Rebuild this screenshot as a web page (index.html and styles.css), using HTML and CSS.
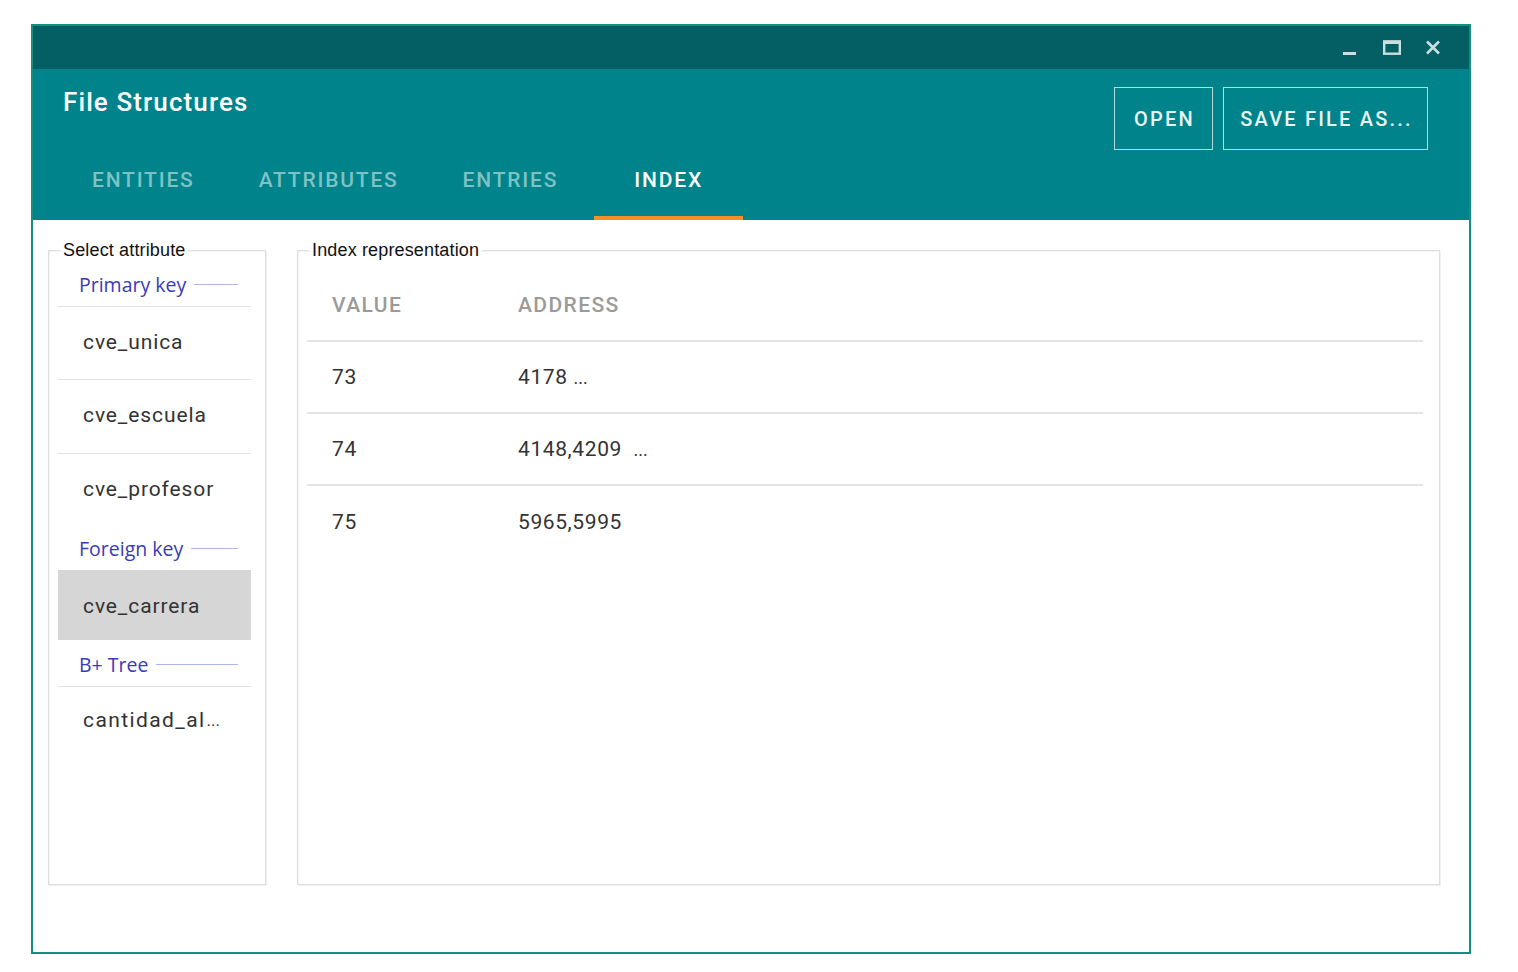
FILE: index.html
```html
<!DOCTYPE html>
<html>
<head>
<meta charset="utf-8">
<link rel="stylesheet" href="styles.css">
</head>
<body>
<div class="window">
  <div class="titlebar">
    <span class="ctl">
      <svg width="16" height="16" viewBox="0 0 16 16"><rect x="2" y="12" width="13" height="3" fill="#c9dfe0"/></svg>
    </span>
    <span class="ctl">
      <svg width="20" height="16" viewBox="0 0 20 16"><rect x="3.2" y="1.5" width="15.6" height="12.2" fill="none" stroke="#c9dfe0" stroke-width="2.4"/><rect x="2" y="0.5" width="18" height="3.5" fill="#c9dfe0"/></svg>
    </span>
    <span class="ctl">
      <svg width="16" height="16" viewBox="0 0 16 16"><path d="M2 1.5 L14 13.5 M14 1.5 L2 13.5" stroke="#c9dfe0" stroke-width="2.6"/></svg>
    </span>
  </div>
  <div class="header">
    <div class="header-top">
      <div class="app-title">File Structures</div>
      <div class="actions">
        <button class="btn btn-open">OPEN</button>
        <button class="btn btn-save">SAVE FILE AS...</button>
      </div>
    </div>
    <div class="tabs">
      <div class="tab">ENTITIES</div>
      <div class="tab">ATTRIBUTES</div>
      <div class="tab">ENTRIES</div>
      <div class="tab active">INDEX</div>
    </div>
  </div>
  <div class="content">
    <fieldset class="group left">
      <legend>Select attribute</legend>
      <div class="list">
        <div class="ghead"><span>Primary key</span><i></i></div>
        <div class="item first">cve_unica</div>
        <div class="item">cve_escuela</div>
        <div class="item">cve_profesor</div>
        <div class="ghead"><span>Foreign key</span><i></i></div>
        <div class="item selected">cve_carrera</div>
        <div class="ghead"><span>B+ Tree</span><i></i></div>
        <div class="item wide">cantidad_al<span class="dots">...</span></div>
      </div>
    </fieldset>
    <fieldset class="group right">
      <legend>Index representation</legend>
      <div class="table">
        <div class="row thead"><div class="c1">VALUE</div><div class="c2">ADDRESS</div></div>
        <div class="row"><div class="c1">73</div><div class="c2">4178 <span class="dots">...</span></div></div>
        <div class="row"><div class="c1">74</div><div class="c2">4148,4209 &nbsp;<span class="dots">...</span></div></div>
        <div class="row last"><div class="c1">75</div><div class="c2">5965,5995</div></div>
      </div>
    </fieldset>
  </div>
</div>
</body>
</html>
```

FILE: styles.css
```css
html, body { margin: 0; padding: 0; background: #ffffff; }
body { font-family: Roboto, "Liberation Sans", sans-serif; }

.window {
  position: absolute;
  left: 31px;
  top: 24px;
  width: 1436px;
  height: 926px;
  border: 2px solid #12907d;
  display: flex;
  flex-direction: column;
  background: #fff;
}

.titlebar {
  height: 43px;
  background: #035f63;
  display: flex;
  justify-content: flex-end;
  align-items: center;
  padding-right: 28px;
  gap: 24px;
}
.ctl { display: flex; align-items: center; height: 16px; }

.header {
  background: #00838a;
  height: 151px;
  box-sizing: border-box;
  display: flex;
  flex-direction: column;
}
.header-top {
  display: flex;
  justify-content: space-between;
  align-items: flex-start;
  padding: 0 41px 0 30px;
  height: 84px;
}
.app-title {
  color: #ffffff;
  font-size: 26px;
  font-weight: 500;
  margin-top: 18px;
  letter-spacing: 1.1px;
}
.actions { display: flex; gap: 10px; margin-top: 18px; }
.btn {
  background: transparent;
  border: 1px solid rgba(255,255,255,0.7);
  color: #e8f4f4;
  font-family: Roboto, "Liberation Sans", sans-serif;
  font-size: 20px;
  font-weight: 500;
  letter-spacing: 2.2px;
  height: 63px;
  padding: 0 0 0 2px;
  box-sizing: border-box;
}
.btn-open { width: 99px; }
.btn-save { width: 205px; }

.tabs {
  display: flex;
  padding-left: 27px;
  height: 67px;
}
.tab {
  color: #7fc2c5;
  font-size: 21px;
  font-weight: 500;
  letter-spacing: 1.8px;
  padding: 0 32px 13px;
  text-align: center;
  display: flex;
  align-items: center;
  justify-content: center;
  box-sizing: border-box;
}
.tab:nth-child(3) { margin-right: 4px; }
.tab.active {
  color: #ffffff;
  width: 149px;
  padding: 0 0 9px;
  border-bottom: 4px solid #f58e26;
}

.content {
  flex: 1;
  display: flex;
  gap: 31px;
  padding: 22px 29px 0 15px;
  align-items: flex-start;
}

.group {
  border: 1px solid #dedede;
  box-shadow: inset 1px 1px 0 #f4f4f4, 1px 1px 0 #f0f0f0;
  margin: 0;
  height: 643px;
  box-sizing: border-box;
  font-family: "Liberation Sans", Arial, sans-serif;
}
.group legend {
  font-size: 18px;
  line-height: 17px;
  color: #111;
  padding: 0 3px;
  margin-left: 2px;
  letter-spacing: 0.15px;
}
.left { width: 218px; padding: 0 14px 0 9px; }
.right { flex: 1; padding: 0 16px 0 9px; }

.list { margin-top: 4px; font-family: Roboto, "Liberation Sans", sans-serif; }
.ghead {
  height: 43px;
  display: flex;
  align-items: center;
  padding: 0 13px 0 21px;
  color: #3b3bb8;
  font-size: 19.5px;
  font-family: "Open Sans", "Noto Sans", sans-serif;
}
.ghead i {
  flex: 1;
  height: 1px;
  background: #a9b9e2;
  margin-left: 8px;
}
.item {
  height: 74px;
  border-top: 1px solid #e2e2e2;
  display: flex;
  align-items: center;
  padding: 0 0 3px 25px;
  font-size: 21px;
  letter-spacing: 0.9px;
  color: #333;
  box-sizing: border-box;
}
.item.first { height: 73px; }
.item.selected {
  background: #d6d6d6;
  border-top-color: #d6d6d6;
  height: 70px;
  padding-bottom: 0;
  margin-bottom: 3px;
}
.item.wide { letter-spacing: 1.4px; padding-bottom: 8px; }
.item .dots { font-size: 17px; letter-spacing: 0; margin-left: 1px; }

.table { margin-top: 6px; font-family: Roboto, "Liberation Sans", sans-serif; }
.row {
  display: flex;
  align-items: center;
  height: 72px;
  border-bottom: 2px solid #e4e4e4;
  font-size: 21px;
  letter-spacing: 0.6px;
  color: #333;
  box-sizing: border-box;
}
.row.thead {
  height: 77px;
  color: #9a9a9a;
  font-weight: 500;
  letter-spacing: 1.4px;
  padding-top: 4px;
}
.row.last { border-bottom: none; }
.c1 { width: 211px; padding-left: 25px; box-sizing: border-box; }
.c2 { flex: 1; }
.row .dots { font-size: 18px; letter-spacing: 0; }
```
